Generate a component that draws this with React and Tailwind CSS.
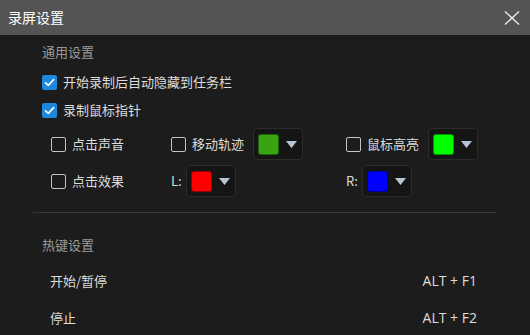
import React from 'react';

const font = { fontFamily: '"Noto Sans CJK SC", "Noto Sans", sans-serif' };
const latin = { fontFamily: '"Open Sans", "Noto Sans", sans-serif' };

function Check({ checked, label }) {
  return (
    <div className="flex items-center gap-[6px]">
      {checked ? (
        <span className="w-[15px] h-[15px] rounded-[2px] bg-[#1e88dc] flex items-center justify-center">
          <svg width="11" height="11" viewBox="0 0 11 11" fill="none">
            <path d="M1.5 5.8 4.3 8.4 9.6 2.6" stroke="#fff" strokeWidth="1.6" strokeLinecap="round" strokeLinejoin="round" />
          </svg>
        </span>
      ) : (
        <span className="w-[15px] h-[15px] rounded-[2px] border border-[#c4c4c4]" />
      )}
      <span className="text-[13px] leading-5 text-[#dcdcdc]">{label}</span>
    </div>
  );
}

function ColorPick({ color }) {
  return (
    <div className="w-[50px] h-[32px] rounded-[4px] border border-[#2c2c2c] bg-[#151515] flex items-center pl-[4px] gap-[7px]">
      <span className="w-[21px] h-[21px] rounded-[3px] border border-black/40" style={{ backgroundColor: color }} />
      <svg width="11" height="7" viewBox="0 0 11 7">
        <path d="M0 0h11L5.5 7z" fill="#b9c4d4" />
      </svg>
    </div>
  );
}

export default function App() {
  return (
    <div className="w-[530px] h-[335px] bg-[#1c1c1c] flex flex-col overflow-hidden" style={font}>
      <div className="h-[35px] shrink-0 bg-[#545454] flex items-center justify-between pl-[8px] pr-[10px]">
        <span className="text-[14px] text-white">录屏设置</span>
        <svg width="16" height="14" viewBox="0 0 16 14" fill="none">
          <path d="M1 0.5 15 13.5M15 0.5 1 13.5" stroke="#e8e8e8" strokeWidth="1.4" />
        </svg>
      </div>

      <div className="mt-[7px] pl-[42px] text-[13px] leading-5 text-[#9a9a9a]">通用设置</div>
      <div className="mt-[10px] pl-[42px]">
        <Check checked label="开始录制后自动隐藏到任务栏" />
      </div>
      <div className="mt-[8px] pl-[42px]">
        <Check checked label="录制鼠标指针" />
      </div>

      <div className="mt-[8px] pl-[51px] flex items-center h-[32px]">
        <div className="w-[120px]">
          <Check label="点击声音" />
        </div>
        <div className="w-[175px] flex items-center gap-[9px]">
          <Check label="移动轨迹" />
          <ColorPick color="#3aa311" />
        </div>
        <div className="flex items-center gap-[9px]">
          <Check label="鼠标高亮" />
          <ColorPick color="#00ff00" />
        </div>
      </div>

      <div className="mt-[5px] pl-[51px] flex items-center h-[32px]">
        <div className="w-[120px]">
          <Check label="点击效果" />
        </div>
        <div className="w-[175px] flex items-center gap-[4px]">
          <span className="text-[13px] leading-5 text-[#dcdcdc]">L:</span>
          <ColorPick color="#ff0000" />
        </div>
        <div className="flex items-center gap-[4px]">
          <span className="text-[13px] leading-5 text-[#dcdcdc]">R:</span>
          <ColorPick color="#0000ff" />
        </div>
      </div>

      <div className="mt-[15px] ml-[33px] mr-[34px] h-px bg-[#383838]" />

      <div className="mt-[22px] pl-[42px] text-[13px] leading-5 text-[#9a9a9a]">热键设置</div>
      <div className="mt-[16px] pl-[50px] pr-[53px] flex justify-between text-[13px] leading-5 text-[#dcdcdc]">
        <span>开始/暂停</span>
        <span className="text-[14px]" style={latin}>ALT + F1</span>
      </div>
      <div className="mt-[17px] pl-[50px] pr-[53px] flex justify-between text-[13px] leading-5 text-[#dcdcdc]">
        <span>停止</span>
        <span className="text-[14px]" style={latin}>ALT + F2</span>
      </div>
    </div>
  );
}
